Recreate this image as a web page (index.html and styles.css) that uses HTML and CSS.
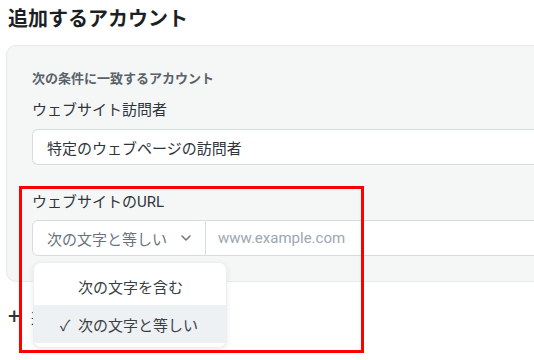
FILE: index.html
```html
<!DOCTYPE html>
<html lang="ja">
<head>
    <meta charset="UTF-8">
    <meta name="viewport" content="width=device-width, initial-scale=1.0">
    <title>追加するアカウント</title>
    <link rel="stylesheet" href="styles.css">
</head>
<body>

    <h1 class="page-title">追加するアカウント</h1>

    <div class="rule-panel">
        <div class="rule-caption">次の条件に一致するアカウント</div>

        <div class="field-label">ウェブサイト訪問者</div>
        <div class="text-box">特定のウェブページの訪問者</div>

        <div class="field-label url-label">ウェブサイトのURL</div>
        <div class="url-row">
            <div class="match-select">
                <span>次の文字と等しい</span>
                <svg class="chevron" width="10" height="6" viewBox="0 0 10 6">
                    <path d="M1 1l4 4 4-4" fill="none" stroke="currentColor" stroke-width="1.5" stroke-linecap="round" stroke-linejoin="round"/>
                </svg>
            </div>
            <div class="url-input">www.example.com</div>

            <!-- open dropdown -->
            <ul class="match-menu">
                <li class="menu-item">次の文字を含む</li>
                <li class="menu-item selected"><span class="check">✓</span>次の文字と等しい</li>
            </ul>
        </div>
    </div>

    <div class="add-row"><span class="plus">+</span>追</div>

    <div class="highlight-box"></div>

</body>
</html>
```

FILE: styles.css
```css
body {
    margin: 0;
    font-family: Roboto, "Noto Sans CJK JP", sans-serif;
    color: #2f353b;
    background-color: #fff;
    overflow: hidden;
    position: relative;
    width: 534px;
    height: 360px;
}

.page-title {
    margin: 5px 0 12px 8px;
    font-size: 20px;
    line-height: 28px;
    font-weight: 700;
    color: #1c1f23;
}

.rule-panel {
    margin-left: 6px;
    width: 600px;
    box-sizing: border-box;
    padding: 24px 0 25px 25px;
    background-color: #f5f7f7;
    border: 1px solid #e6eaea;
    border-radius: 10px 0 0 10px;
}

.rule-caption {
    font-size: 13px;
    line-height: 18px;
    font-weight: 700;
    color: #59626a;
}

.field-label {
    margin-top: 11px;
    font-size: 15px;
    line-height: 22px;
}

.url-label {
    margin-top: 26px;
}

.text-box {
    margin-top: 8px;
    height: 36px;
    box-sizing: border-box;
    padding: 0 14px;
    display: flex;
    align-items: center;
    font-size: 15px;
    background-color: #fff;
    border: 1px solid #d6dde2;
    border-right: none;
    border-radius: 6px 0 0 6px;
}

.url-row {
    position: relative;
    margin-top: 7px;
    display: flex;
    height: 36px;
}

.match-select {
    width: 174px;
    box-sizing: border-box;
    display: flex;
    align-items: center;
    justify-content: space-between;
    padding: 0 14px;
    font-size: 15px;
    color: #6b747c;
    background-color: #fff;
    border: 1px solid #d6dde2;
    border-radius: 6px 0 0 6px;
}

.chevron {
    color: #6b747c;
}

.url-input {
    flex: 1;
    display: flex;
    align-items: center;
    padding-left: 12px;
    font-size: 15px;
    color: #9ba7b2;
    background-color: #fff;
    border-top: 1px solid #d6dde2;
    border-bottom: 1px solid #d6dde2;
}

.match-menu {
    position: absolute;
    left: 1px;
    top: 42px;
    width: 194px;
    margin: 0;
    padding: 4px 0;
    list-style: none;
    background-color: #fff;
    border: 1px solid #eceff1;
    border-radius: 8px;
    box-shadow: 0 2px 6px rgba(0, 0, 0, 0.08);
    box-sizing: border-box;
    z-index: 2;
}

.menu-item {
    display: flex;
    align-items: center;
    height: 38px;
    padding-left: 44px;
    font-size: 15px;
    color: #3a4046;
    position: relative;
}

.menu-item.selected {
    background-color: #eef1f3;
}

.check {
    position: absolute;
    left: 26px;
    font-size: 15px;
}

.add-row {
    margin: 24px 0 0 8px;
    font-size: 15px;
    line-height: 22px;
    color: #2f353b;
}

.plus {
    display: inline-block;
    width: 23px;
    font-size: 22px;
}

.highlight-box {
    position: absolute;
    left: 19px;
    top: 186px;
    width: 345px;
    height: 167px;
    box-sizing: border-box;
    border: 3px solid #ff0000;
    z-index: 3;
}
```
